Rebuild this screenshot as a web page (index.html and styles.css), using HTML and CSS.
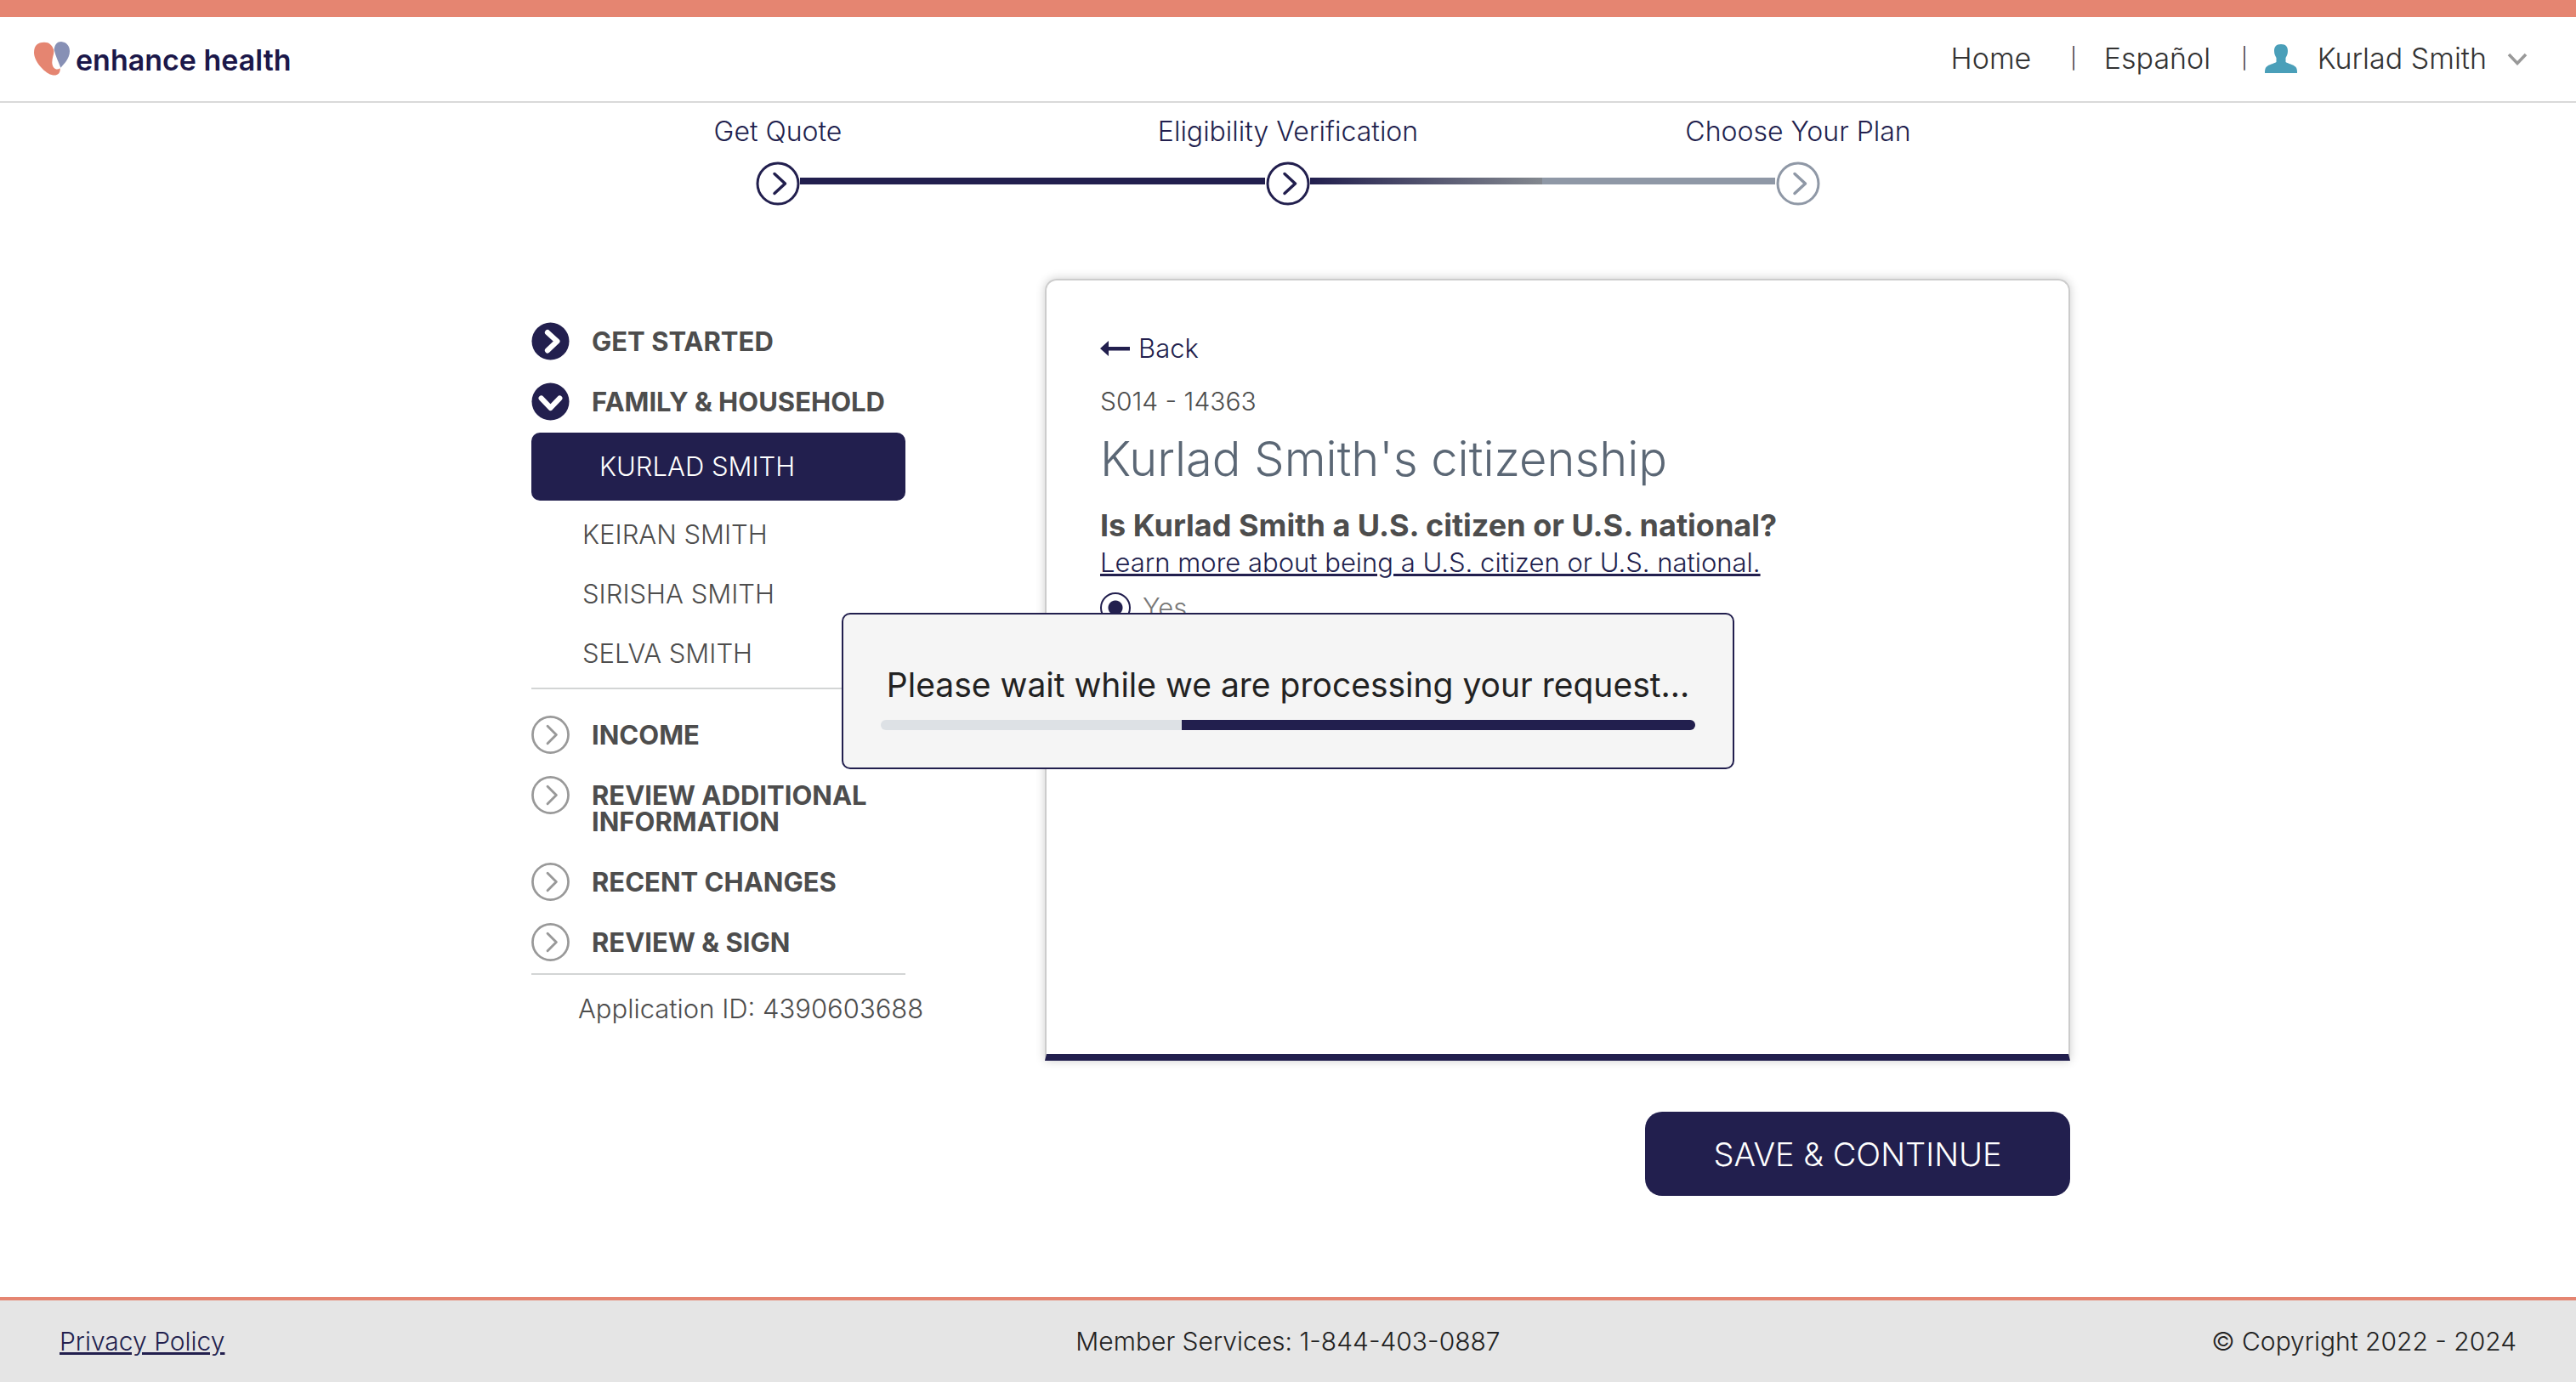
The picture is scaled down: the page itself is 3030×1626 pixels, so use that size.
FILE: index.html
```html
<!DOCTYPE html>
<html lang="en">
<head>
<meta charset="utf-8">
<meta name="viewport" content="width=device-width, initial-scale=1">
<title>Enhance Health - Eligibility Verification</title>
<link rel="stylesheet" href="styles.css">
</head>
<body>
<svg class="defs" aria-hidden="true">
  <symbol id="ring" viewBox="0 0 52 52"><circle cx="26" cy="26" r="24" fill="#fff" stroke="currentColor" stroke-width="3"/><path d="M22 14.500 34.500 26 22 37.500" fill="none" stroke="currentColor" stroke-width="3.500" stroke-linecap="round" stroke-linejoin="round"/></symbol>
  <symbol id="ring-small" viewBox="0 0 46 46"><circle cx="23" cy="23" r="21.500" fill="none" stroke="currentColor" stroke-width="2.800"/><path d="M19.500 12.500 30 23 19.500 33.500" fill="none" stroke="currentColor" stroke-width="3" stroke-linecap="round" stroke-linejoin="round"/></symbol>
  <symbol id="disc" viewBox="0 0 46 46"><circle cx="23" cy="23" r="22.500" fill="currentColor"/><path d="M19.500 12.500 31 23 19.500 34" fill="none" stroke="#fff" stroke-width="6.500" stroke-linecap="round" stroke-linejoin="round"/></symbol>
  <symbol id="disc-down" viewBox="0 0 46 46"><circle cx="23" cy="23" r="22.500" fill="currentColor"/><path d="M12 19 23 30.500 34 19" fill="none" stroke="#fff" stroke-width="6.500" stroke-linecap="round" stroke-linejoin="round"/></symbol>
</svg>

<header class="header">
  <a class="logo" href="#">
    <svg width="42" height="40" viewBox="0 0 126 120" aria-hidden="true"><path fill="#e58571" d="M70 30C64 12 54 2 36 2 12 2 0 14 0 38c0 30 34 70 62 79 18 6 32-4 30-23-10 8-26 4-28-18-1-20 8-32 6-46Z"/><path fill="#8790b5" d="M71 28C74 8 82 0 96 0c18 2 30 14 30 34 0 26-22 48-32 58-8-22-18-40-23-64Z"/></svg>
    <span>enhance health</span>
  </a>
  <nav class="nav">
    <a class="nav-home" href="#">Home</a>
    <span class="bar">|</span>
    <a class="nav-lang" href="#">Español</a>
    <span class="bar">|</span>
    <button class="user" type="button">
      <svg width="38" height="34" viewBox="0 0 38 34" aria-hidden="true"><path fill="#4a9fb9" d="M19 0c6 0 8 3.500 8 8 0 4-1.500 6-2.500 8v5c3 2 9 3 11.500 5.500C38 28.500 38 31 38 34H0c0-3 0-5.500 2-7.500C4.500 24 10.500 23 13.500 21v-5C12.500 14 11 12 11 8c0-4.500 2-8 8-8Z"/></svg>
      <span>Kurlad Smith</span>
      <svg width="24" height="15" viewBox="0 0 24 15" aria-hidden="true"><path d="M2 2 12 12.500 22 2" fill="none" stroke="#999" stroke-width="3.500"/></svg>
    </button>
  </nav>
</header>

<ol class="steps">
  <li class="step"><span>Get Quote</span><div class="marker done"><svg><use href="#ring"/></svg></div></li>
  <li class="step"><span>Eligibility Verification</span><div class="marker current"><svg><use href="#ring"/></svg></div></li>
  <li class="step"><span>Choose Your Plan</span><div class="marker todo"><svg><use href="#ring"/></svg></div></li>
</ol>

<main class="layout">
  <aside class="sidebar">
    <a class="section active" href="#"><svg><use href="#disc"/></svg><span>GET STARTED</span></a>
    <a class="section active" href="#"><svg><use href="#disc-down"/></svg><span>FAMILY &amp; HOUSEHOLD</span></a>
    <ul class="members">
      <li><a class="selected" href="#">KURLAD SMITH</a></li>
      <li><a href="#">KEIRAN SMITH</a></li>
      <li><a href="#">SIRISHA SMITH</a></li>
      <li><a href="#">SELVA SMITH</a></li>
    </ul>
    <div class="upcoming">
      <a class="section" href="#"><svg><use href="#ring-small"/></svg><span>INCOME</span></a>
      <a class="section" href="#"><svg><use href="#ring-small"/></svg><span>REVIEW ADDITIONAL INFORMATION</span></a>
      <a class="section" href="#"><svg><use href="#ring-small"/></svg><span>RECENT CHANGES</span></a>
      <a class="section" href="#"><svg><use href="#ring-small"/></svg><span>REVIEW &amp; SIGN</span></a>
    </div>
    <p class="app-id">Application ID: 4390603688</p>
  </aside>

  <form class="content">
    <section class="card">
      <a class="back" href="#"><svg width="35" height="18" viewBox="0 0 35 18" aria-hidden="true"><path fill="#221f4e" d="M0 9 10 0v7h25v4.500H10V18Z"/></svg>Back</a>
      <p class="code">S014 - 14363</p>
      <h1>Kurlad Smith's citizenship</h1>
      <h2 id="question">Is Kurlad Smith a U.S. citizen or U.S. national?</h2>
      <a class="learn" href="#">Learn more about being a U.S. citizen or U.S. national.</a>
      <div class="option"><input type="radio" id="yes" name="citizen" checked><label for="yes">Yes</label></div>
    </section>
    <button class="save" type="button">SAVE &amp; CONTINUE</button>
  </form>
</main>

<footer class="footer">
  <a href="#">Privacy Policy</a>
  <span>Member Services: 1-844-403-0887</span>
  <span>© Copyright 2022 - 2024</span>
</footer>

<dialog class="wait" open>
  <p id="wait-text">Please wait while we are processing your request...</p>
  <div class="progress" role="progressbar" aria-labelledby="wait-text"><div class="progress-fill"></div></div>
</dialog>
</body>
</html>
```
FILE: styles.css
```css
:root {
  --navy: #221f4e;
  --coral: #e58571;
  --text: #4d4d4d;
  --muted: #8f98a6;
}

* { box-sizing: border-box; }

body {
  margin: 0;
  min-height: 100vh;
  display: flex;
  flex-direction: column;
  background: #fff;
  color: var(--text);
  font: 300 31px/36px Inter, "Open Sans", sans-serif;
}

p, h1, h2, ol, ul { margin: 0; padding: 0; }
ol, ul { list-style: none; }
a { color: inherit; text-decoration: none; }
svg { display: block; flex: none; }
button { font: inherit; color: inherit; border: 0; background: none; cursor: pointer; }
.defs { position: absolute; width: 0; height: 0; }

.header {
  display: flex;
  align-items: center;
  justify-content: space-between;
  padding: 29px 57px 30px 40px;
  border-top: 20px solid var(--coral);
  border-bottom: 2px solid #d9d9d9;
}
.logo {
  display: flex;
  align-items: center;
  gap: 7px;
  color: #1b1749;
  font-size: 34px;
  font-weight: 600;
}
.logo span { padding-top: 4px; }
.nav {
  display: flex;
  align-items: center;
  color: #333;
  font-size: 34px;
}
.bar { font-size: 24px; }
.nav-home { margin-right: 46px; }
.nav-lang { margin: 0 36px 0 32px; }
.user {
  display: flex;
  align-items: center;
  gap: 24px;
  padding: 0;
  margin-left: 20px;
}

.steps {
  display: grid;
  grid-template-columns: repeat(3, 1fr);
  width: 100%;
  max-width: 1800px;
  margin: 0 auto;
  padding-top: 16px;
  font-size: 32px;
}
.step {
  display: flex;
  flex-direction: column;
  align-items: center;
  gap: 17px;
  color: var(--navy);
}
.marker {
  position: relative;
  width: 100%;
  display: flex;
  justify-content: center;
  color: var(--navy);
}
.marker svg { width: 52px; height: 52px; }
.marker.done::after,
.marker.current::after {
  content: "";
  position: absolute;
  top: 19px;
  left: calc(50% + 26px);
  width: calc(100% - 53px);
  height: 8px;
  background: var(--navy);
}
.marker.current::after { background: linear-gradient(90deg, var(--navy), #83888f 50%, var(--muted) 50%); }
.marker.todo { color: var(--muted); }

.layout {
  flex: 1;
  display: grid;
  grid-template-columns: 440px 1fr;
  gap: 164px;
  width: 100%;
  max-width: 1840px;
  margin: 86px auto 0;
  padding: 0 0 118px 30px;
}

.sidebar { padding-top: 38px; }
.section {
  display: flex;
  gap: 26px;
  padding: 13px 0;
  color: #999;
}
.section svg { width: 45px; height: 45px; }
.section span {
  margin: 7px 0;
  color: var(--text);
  font-weight: 700;
  line-height: 31px;
}
.section.active { color: var(--navy); }
.members {
  margin-top: 1px;
  padding-bottom: 5px;
  border-bottom: 2px solid #d3d5d5;
}
.members a {
  display: block;
  padding-left: 60px;
  line-height: 70px;
}
.members .selected {
  margin-bottom: 5px;
  padding-left: 80px;
  border-radius: 10px;
  background: var(--navy);
  color: #fff;
  line-height: 80px;
}
.upcoming {
  padding: 18px 0 1px;
  border-bottom: 2px solid #d3d5d5;
}
.app-id {
  margin-top: 22px;
  padding-left: 55px;
  white-space: nowrap;
}

.content {
  display: flex;
  flex-direction: column;
  align-items: flex-end;
  gap: 60px;
}
.card {
  width: 100%;
  min-height: 920px;
  display: flex;
  flex-direction: column;
  align-items: flex-start;
  padding: 62px 63px;
  border: 2px solid #ccc;
  border-bottom: 8px solid var(--navy);
  border-radius: 14px 14px 0 0;
  box-shadow: 0 0 12px rgba(0, 0, 0, 0.2);
}
.back {
  display: flex;
  align-items: center;
  gap: 10px;
  margin-bottom: 26px;
  color: var(--navy);
}
.code { font-size: 30px; }
h1 {
  margin: 20px 0 28px;
  color: #5b6775;
  font-size: 56px;
  font-weight: 300;
  line-height: 60px;
}
h2 {
  margin-bottom: 6px;
  font-size: 36px;
  font-weight: 700;
  line-height: 40px;
}
.learn { color: var(--navy); text-decoration: underline; }
.option {
  display: flex;
  align-items: center;
  gap: 14px;
  margin-top: 17px;
  color: #777;
}
.option input {
  appearance: none;
  width: 36px;
  height: 36px;
  margin: 0;
  border: 2px solid var(--navy);
  border-radius: 50%;
  background: radial-gradient(circle, var(--navy) 8px, #fff 9px);
}
.save {
  min-width: 500px;
  padding: 26px 40px 25px;
  border-radius: 20px;
  background: var(--navy);
  color: #fff;
  font-size: 38px;
  line-height: 48px;
}

.footer {
  display: grid;
  grid-template-columns: 1fr auto 1fr;
  align-items: center;
  padding: 30px 70px;
  border-top: 4px solid var(--coral);
  background: #e5e5e5;
  color: #222;
  font-size: 30px;
}
.footer a { justify-self: start; color: var(--navy); text-decoration: underline; }
.footer span:last-child { justify-self: end; }

.wait {
  position: fixed;
  inset: 0;
  width: 1050px;
  max-width: 100%;
  height: fit-content;
  margin: auto;
  padding: 59px 44px 44px;
  border: 2px solid var(--navy);
  border-radius: 10px;
  background: #f5f5f5;
  color: #222;
  font-size: 39px;
  font-weight: 400;
  line-height: 48px;
  text-align: center;
}
.progress {
  margin-top: 17px;
  border-radius: 6px;
  overflow: hidden;
  background: #dde1e5;
}
.progress-fill {
  width: 63%;
  height: 12px;
  margin-left: auto;
  background: var(--navy);
}
```
